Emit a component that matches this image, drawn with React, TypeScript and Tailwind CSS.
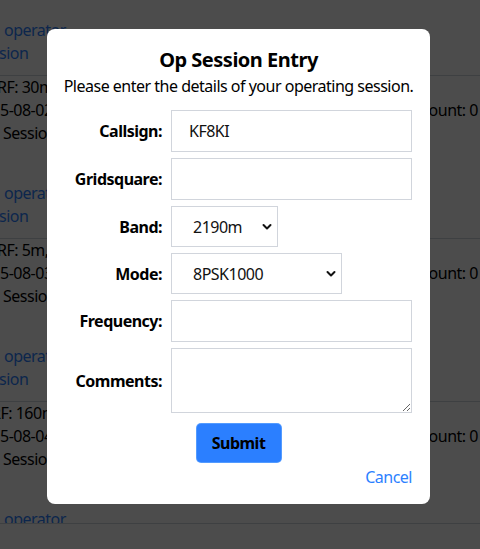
import React from 'react';

type Row = {
  rf: string;
  rfOffset: string;
  date: string;
  session: string;
};

const ROWS: Row[] = [
  { rf: 'RF: 40m, FT8', rfOffset: 'ml-[-3px]', date: '5-08-01 13:05Z', session: 'Session #41' },
  { rf: 'RF: 30m, CW', rfOffset: 'ml-[-3px]', date: '5-08-02 18:40Z', session: 'Session #42' },
  { rf: 'RF: 5m, FT4', rfOffset: 'ml-[-3px]', date: '5-08-03 09:12Z', session: 'Session #43' },
  { rf: 'RF: 160m, SSB', rfOffset: 'ml-[-9px]', date: '5-08-04 02:55Z', session: 'Session #44' },
];

const BANDS = ['2190m', '630m', '160m', '80m', '60m', '40m', '30m', '20m', '17m', '15m', '12m', '10m', '6m', '5m', '2m'];
const MODES = ['8PSK1000', 'CW', 'FT8', 'FT4', 'SSB', 'RTTY', 'PSK31', 'JS8'];

function SessionRow({ row, first }: { row: Row; first?: boolean }) {
  return (
    <div className={`box-border h-[163px] shrink-0 border-t border-gray-300 pt-[10px]${first ? ' mt-[-88px]' : ''}`}>
      <div className="grid grid-cols-[419px_1fr] leading-[23px]">
        <div className={`h-[23px] whitespace-nowrap ${row.rfOffset}`}>{row.rf}</div>
        <div className="h-[23px]" />
        <div className="h-[23px] whitespace-nowrap">{row.date}</div>
        <div className="h-[23px] whitespace-nowrap">Count: 0</div>
        <div className="ml-[3px] h-[23px] whitespace-nowrap">{row.session}</div>
        <div className="h-[23px]" />
      </div>
      <div className="mt-[37px] leading-[23px] text-blue-500">
        <div className="ml-[4px] h-[23px]">operator</div>
        <div className="ml-[-1px] h-[23px]">sion</div>
      </div>
    </div>
  );
}

function Chevron() {
  return (
    <svg
      className="pointer-events-none absolute right-[6px] top-1/2 -translate-y-1/2"
      width="10"
      height="7"
      viewBox="0 0 10 7"
      fill="none"
    >
      <path d="M1.5 1.5 L5 5 L8.5 1.5" stroke="#111" strokeWidth="2" strokeLinecap="round" strokeLinejoin="round" />
    </svg>
  );
}

function FormRow({ label, children }: { label: string; children: React.ReactNode }) {
  return (
    <div className="flex items-center gap-[9px]">
      <label className="w-[99px] shrink-0 whitespace-nowrap text-right font-bold text-black">{label}</label>
      {children}
    </div>
  );
}

export default function App() {
  return (
    <div
      className="relative h-[549px] w-[480px] overflow-hidden bg-white text-[16px] tracking-[-0.5px] text-black"
      style={{ fontFamily: '"Noto Sans", "Open Sans", sans-serif' }}
    >
      {/* page behind the dialog */}
      <div className="flex flex-col">
        {ROWS.map((row, i) => (
          <SessionRow key={i} row={row} first={i === 0} />
        ))}
      </div>
      <div className="absolute bottom-0 left-0 right-0 h-[26px] border-t border-gray-300 bg-white" />

      {/* dimmed overlay + dialog */}
      <div className="absolute inset-0 bg-black/70">
        <div className="ml-[47px] mt-[29px] w-[383px] rounded-lg bg-white px-[16px] pt-[17px] pb-[15px]">
          <h2 className="whitespace-nowrap text-center text-[20px] font-bold leading-[28px]">Op Session Entry</h2>
          <p className="-mx-[4px] whitespace-nowrap text-center leading-[24px]">Please enter the details of your operating session.</p>

          <div className="mt-[12px] flex flex-col gap-[6px]">
            <FormRow label="Callsign:">
              <input
                defaultValue="KF8KI"
                className="h-[42px] w-[241px] border border-gray-300 px-[17px] text-[#111] outline-none"
              />
            </FormRow>
            <FormRow label="Gridsquare:">
              <input className="h-[42px] w-[241px] border border-gray-300 px-[17px] outline-none" />
            </FormRow>
            <FormRow label="Band:">
              <div className="relative">
                <select defaultValue="2190m" className="h-[41px] w-[107px] appearance-none border border-gray-300 bg-white pl-[21px] text-[#111] outline-none">
                  {BANDS.map(b => (
                    <option key={b}>{b}</option>
                  ))}
                </select>
                <Chevron />
              </div>
            </FormRow>
            <FormRow label="Mode:">
              <div className="relative">
                <select defaultValue="8PSK1000" className="h-[41px] w-[171px] appearance-none border border-gray-300 bg-white pl-[21px] text-[#111] outline-none">
                  {MODES.map(m => (
                    <option key={m}>{m}</option>
                  ))}
                </select>
                <Chevron />
              </div>
            </FormRow>
            <FormRow label="Frequency:">
              <input className="h-[42px] w-[241px] border border-gray-300 px-[17px] outline-none" />
            </FormRow>
            <FormRow label="Comments:">
              <textarea className="block h-[65px] w-[241px] border border-gray-300 px-[17px] outline-none" />
            </FormRow>
          </div>

          <button className="mx-auto mt-[10px] block h-[40px] w-[86px] rounded-[5px] border border-blue-300/40 bg-blue-500 font-bold text-black">
            Submit
          </button>
          <div className="mt-[2px] pr-[2px] text-right leading-[24px] text-blue-500">Cancel</div>
        </div>
      </div>
    </div>
  );
}
